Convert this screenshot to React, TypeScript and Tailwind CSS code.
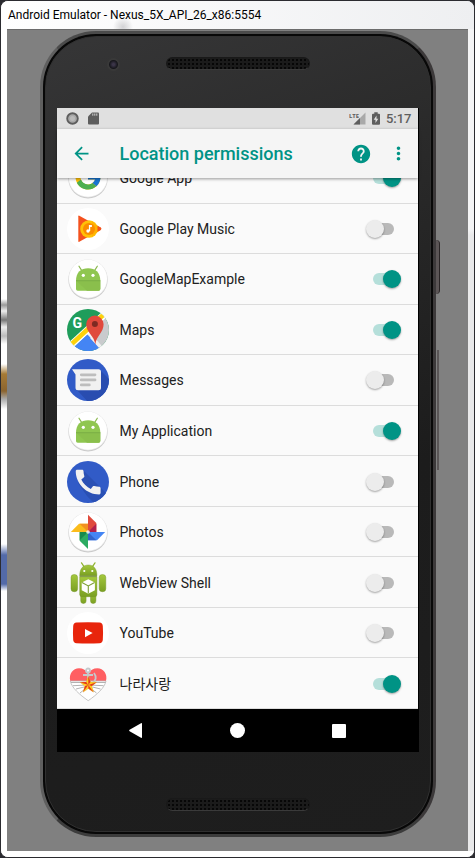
import type { ReactNode } from 'react';
import { MdArrowBack, MdHelp, MdMoreVert } from 'react-icons/md';
import { FcGoogle } from 'react-icons/fc';

function Icon({ children }: { children: ReactNode }) {
  return (
    <svg viewBox="0 0 42 42" className="size-[42px] shrink-0" aria-hidden="true">
      {children}
    </svg>
  );
}

function Disc() {
  return (
    <>
      <circle cx="21" cy="21.8" r="19.6" fill="#c9c9c9" />
      <circle cx="21" cy="21" r="19.6" fill="#e6e6e6" />
      <circle cx="21" cy="20.8" r="19" fill="#fff" />
    </>
  );
}

const GoogleIcon = () => (
  <Icon>
    <Disc />
    <FcGoogle x="6" y="5" size={30} />
  </Icon>
);

const MusicIcon = () => (
  <Icon>
    <circle cx="21" cy="21" r="21" fill="#fff" />
    <path d="M11.3 8.2q0-1 1-.5L33.6 19.6q1.6 1.3 0 2.5L12.3 33.8q-1 .4-1-.6z" fill="#f4511e" />
    <circle cx="22" cy="21" r="8.800" fill="#ffc107" />
    <path d="M25 13.500 33.200 19.800V22L25 28.500z" fill="#ffb300" />
    <path d="m30.500 17.900 3.100 1.700q1.600 1.300 0 2.500l-3.100 1.700z" fill="#f4511e" />
    <circle cx="22" cy="21" r="6" fill="#fb8c00" />
    <circle cx="21" cy="23" r="1.700" fill="#fff" />
    <path d="M21.900 23v-6h3v1.900h-1.700V23z" fill="#fff" />
  </Icon>
);

const AndroidIcon = () => (
  <Icon>
    <Disc />
    <path d="m12 8.200 2.600 4.200M30.300 8.200l-2.600 4.200" stroke="#8bb84f" strokeWidth="1.200" strokeLinecap="round" />
    <path d="M9 22.500C9 14.500 14 10.300 21.100 10.300s12.200 4.200 12.200 12.200v8.500q0 1.700-1.700 1.700H10.700Q9 32.700 9 31z" fill="#8fc650" />
    <path d="M9 22.500h24.300V31q0 1.700-1.700 1.700H20z" fill="#8abf4c" />
    <path d="M9 22.700h24.300" stroke="#76a743" strokeWidth=".8" />
    <circle cx="16.300" cy="17.300" r="1.600" fill="#fff" />
    <circle cx="26" cy="17.300" r="1.600" fill="#fff" />
  </Icon>
);

const MapsIcon = () => (
  <Icon>
    <clipPath id="map-disc">
      <circle cx="21" cy="21" r="21" />
    </clipPath>
    <g clipPath="url(#map-disc)">
      <path d="M0 0h42v42H0z" fill="#1f9d5b" />
      <path d="M42 2v40H32L19 26z" fill="#c9cbcd" />
      <path d="M3 42 20 25.500 35 42z" fill="#4485f4" />
      <path d="m20 25.500 3-2.500 16 19h-4z" fill="#f1f1f1" />
      <path d="M2 38 40 3" stroke="#fff" strokeWidth="7" />
      <path d="M2 37.500 40 2.500" stroke="#fdd20a" strokeWidth="4.500" />
      <path d="M3 42 20.500 25.500l3 3.300L9 42z" fill="#4485f4" />
    </g>
    <path d="M28.300 35.500C27.500 27 19.200 23.500 19.200 15.300a8.700 8.700 0 0 1 17.400 0c0 8.200-7.300 11.700-8.300 20.200z" fill="#e04a3c" />
    <circle cx="27.900" cy="14.900" r="3" fill="#7e2a22" />
    <text x="5.500" y="18.500" fontSize="14" fontWeight="700" fontFamily="Roboto, sans-serif" fill="#fff">G</text>
  </Icon>
);

const MessagesIcon = () => (
  <Icon>
    <clipPath id="msg-disc">
      <circle cx="21" cy="21" r="21" />
    </clipPath>
    <circle cx="21" cy="21" r="21" fill="#315bc7" />
    <path d="m34 12 10 10v22H22L10 31z" fill="#294db0" clipPath="url(#msg-disc)" />
    <path d="M5 10.300h26.500q2.500 0 2.500 2.500v16q0 2.500-2.500 2.500h-20.500q-2.500 0-2.500-2.500V15.500z" fill="#f1f1f1" />
    <path d="M14.300 15.800H28M14.300 20.900H28M14.300 25.900h8" stroke="#bdbdbd" strokeWidth="2.800" strokeLinecap="round" />
  </Icon>
);

const PhoneIcon = () => (
  <Icon>
    <clipPath id="call-disc">
      <circle cx="21" cy="21" r="21" />
    </clipPath>
    <circle cx="21" cy="21" r="21" fill="#315bc7" />
    <path d="m16 9 28 28-14 8L20 35 11 22l6-5z" fill="#2a50b4" clipPath="url(#call-disc)" />
    <path
      transform="translate(4.600 4.500) scale(1.380)"
      d="M20.010 15.380c-1.230 0-2.420-.2-3.530-.56-.35-.12-.74-.03-1.010.24l-1.570 1.970c-2.830-1.350-5.480-3.900-6.890-6.830l1.950-1.660c.27-.28.35-.67.24-1.020-.37-1.110-.56-2.300-.56-3.530 0-.54-.45-.99-.99-.99H4.190C3.650 3 3 3.240 3 3.990 3 13.280 10.730 21 20.010 21c.71 0 .99-.63.99-1.180v-3.450c0-.54-.45-.99-.99-.99z"
      fill="#f1f1f1"
    />
  </Icon>
);

const PhotosIcon = () => (
  <Icon>
    <Disc />
    <path d="M21 3.700 29.300 12v9H21z" fill="#e04a3c" />
    <path d="M29.300 12.700V21H21z" fill="#b0204c" />
    <path d="M38.200 21 30 29.300h-9V21z" fill="#4485f4" />
    <path d="M29.300 29.300H21V21z" fill="#3163cc" />
    <path d="M21 38 12.700 29.700V21H21z" fill="#2cab62" />
    <path d="M12.700 29.300V21H21z" fill="#178a4d" />
    <path d="M3.800 21 12 12.700h9V21z" fill="#fbbc1c" />
    <path d="M12.700 12.700H21V21z" fill="#f29021" />
    <circle cx="21" cy="21" r="1.800" fill="#fff" opacity=".8" />
  </Icon>
);

const WebViewIcon = () => (
  <Icon>
    <linearGradient id="robot" x1="0" y1="0" x2="0" y2="1">
      <stop offset="0" stopColor="#a4c83d" />
      <stop offset="1" stopColor="#7a9f22" />
    </linearGradient>
    <path d="m14.500.8 2.700 4M28 .8l-2.700 4" stroke="#8fb32d" strokeWidth="1.200" strokeLinecap="round" />
    <g fill="url(#robot)" stroke="#6f8f22" strokeWidth=".4">
      <path d="M12.700 13.700C12.700 6.500 16 3 21.300 3s8.600 3.500 8.600 10.700z" />
      <rect x="4" y="12.500" width="6.600" height="17.200" rx="3" />
      <rect x="32.200" y="12.500" width="6.600" height="17.200" rx="3" />
      <rect x="13.700" y="30" width="5.400" height="11.500" rx="2.400" />
      <rect x="23.500" y="30" width="5.400" height="11.500" rx="2.400" />
      <path d="M12.700 14.700h17.200v17.800q0 2.200-2.200 2.200H14.900q-2.200 0-2.200-2.200z" />
    </g>
    <path d="M12.700 14.200h17.200" stroke="#5d7a1b" strokeWidth=".8" />
    <circle cx="17.300" cy="9" r="1.100" fill="#fff" />
    <circle cx="25.300" cy="9" r="1.100" fill="#fff" />
    <path d="m21.300 17.200 6.600 3.200v7.800l-6.600 3.600-6.600-3.600v-7.800z" fill="#fff" />
    <path d="m15 20.600 6.300 3.300 6.300-3.300M21.300 23.900v7.500" fill="none" stroke="#7d9f35" strokeWidth="1.100" />
  </Icon>
);

const YouTubeIcon = () => (
  <Icon>
    <circle cx="21" cy="21" r="21" fill="#fff" />
    <path d="M9.500 10.600q11.500-.7 23 0 3 .3 3.300 3.300.5 7 0 14-.3 3-3.300 3.300-11.500.7-23 0-3-.3-3.300-3.300-.5-7 0-14 .3-3 3.300-3.300z" fill="#e8250c" />
    <path d="m18 17 7.600 4.100L18 25.200z" fill="#fff" />
  </Icon>
);

const HeartIcon = () => (
  <Icon>
    <path d="M3.300 18C1.500 11 6 5.200 12 5.200c4 0 7.500 2 9.200 5.300 1.700-3.300 5.200-5.300 9.200-5.300 6 0 10.500 5.800 8.600 12.800z" fill="#ff5f62" />
    <path d="M3.300 18H39c-1.500 7-9 13.500-17.800 19.700C12.500 31.500 4.800 25 3.300 18z" fill="#fff" stroke="#b9b9b9" strokeWidth=".8" />
    <path d="M4 19.500h13M25.500 19.500h13M6 22.700l11-.5M36.500 22.700l-11-.5M9 26l8-2M33.500 26l-8-2M13 30l5-4M29.500 30l-5-4" stroke="#aaa" strokeWidth=".9" />
    <g fill="none" stroke="#c5c9cc" strokeWidth="1.800">
      <circle cx="21" cy="7.500" r="2" />
      <path d="M21 9.500v12M16 12h10M27 10c3 4 2 8-2 10" />
    </g>
    <path d="m21.300 13.500 2.200 5.600 6 .2-4.700 3.800 1.700 6-5.200-3.500-5.100 3.500 1.700-6-4.800-3.800 6.100-.2z" fill="#ffd21f" stroke="#e0a018" strokeWidth=".4" />
    <path d="M21.300 13.500V22l2.200-2.900zM29.500 19.300 21.300 22l3.500 1.100zM26.500 29.100 21.300 22v3.600zM16.200 29.100l5.100-7.100-3.400 1.100zM13.100 19.300l8.200 2.700-2.100-2.900z" fill="#e5391d" />
  </Icon>
);

const apps: { name: string; icon: () => ReactNode; on: boolean }[] = [
  { name: 'Google App', icon: GoogleIcon, on: true },
  { name: 'Google Play Music', icon: MusicIcon, on: false },
  { name: 'GoogleMapExample', icon: AndroidIcon, on: true },
  { name: 'Maps', icon: MapsIcon, on: true },
  { name: 'Messages', icon: MessagesIcon, on: false },
  { name: 'My Application', icon: AndroidIcon, on: true },
  { name: 'Phone', icon: PhoneIcon, on: false },
  { name: 'Photos', icon: PhotosIcon, on: false },
  { name: 'WebView Shell', icon: WebViewIcon, on: false },
  { name: 'YouTube', icon: YouTubeIcon, on: false },
  { name: '나라사랑', icon: HeartIcon, on: true },
];

function Switch({ id, on }: { id: string; on: boolean }) {
  return (
    <input
      id={id}
      type="checkbox"
      role="switch"
      defaultChecked={on}
      className="relative h-[18px] w-9 shrink-0 appearance-none before:absolute before:top-[3px] before:left-[7px] before:h-3 before:w-[21px] before:rounded-full before:bg-[#b9b9b9] after:absolute after:top-0 after:left-0 after:size-[18px] after:rounded-full after:bg-[#ececec] after:shadow-[0_1px_2px_rgba(0,0,0,0.35)] checked:before:bg-[#b5dfda] checked:after:left-[17px] checked:after:bg-[#009385]"
    />
  );
}

function Speaker() {
  return (
    <div className="h-[13px] w-[144px] rounded-full border border-[#191919] border-b-[#3a3a3a] bg-[#1b1b1b] bg-[radial-gradient(circle,#070707_1px,transparent_1px)] bg-[length:4px_4px]" />
  );
}

function StatusBar() {
  return (
    <div className="mr-px flex h-[21px] items-center bg-[#e0e0e0] pr-1.5 pl-[9px] text-[#5e5e5e]">
      <svg viewBox="0 0 13 13" className="size-[13px]" aria-hidden="true">
        <circle cx="6.500" cy="6.500" r="5.300" fill="#a8a8a8" stroke="#5e5e5e" strokeWidth="1.900" />
        <circle cx="6.500" cy="6.500" r="2.500" fill="#bababa" />
      </svg>
      <svg viewBox="0 0 11 13" className="ml-[9px] h-[13px] w-[11px]" aria-hidden="true">
        <path d="M4 .5h6q1 0 1 1v10q0 1-1 1H1q-1 0-1-1V4.500z" fill="#5e5e5e" />
        <path d="M4.800 1.500v2.200M6.800 1.500v2.200M8.800 1.500v2.200" stroke="#d0d0d0" />
      </svg>
      <div className="ml-auto flex items-center">
        <svg viewBox="0 0 17 13" className="h-[13px] w-[17px]" aria-label="LTE signal">
          <path d="M16.500.5v12h-12z" fill="#a9a9a9" />
          <path d="M11 6v6.500H4.500z" fill="#5e5e5e" />
          <text x="0" y="5.500" fontSize="6" fontWeight="700" fontFamily="'Noto Sans', sans-serif" fill="#5e5e5e">LTE</text>
        </svg>
        <svg viewBox="0 0 8 13" className="ml-1.5 h-[13px] w-2" aria-hidden="true">
          <path d="M2.300.3h3.400v1.400H7q1 0 1 1v9q0 1-1 1H1q-1 0-1-1v-9q0-1 1-1h1.300z" fill="#5e5e5e" />
          <path d="M4.500 3.500 1.700 7.700h1.800V11l2.800-4.300H4.500z" fill="#e0e0e0" />
        </svg>
        <span className="ml-1.5 text-[13px] leading-5 font-medium">5:17</span>
      </div>
    </div>
  );
}

export default function App() {
  return (
    <div className="min-h-screen bg-[#2b2b30] font-['Roboto','Noto_Sans_CJK_KR',sans-serif]">
      <div className="flex min-h-screen flex-col overflow-hidden rounded-lg border border-[#2b2b30] bg-[#f6f6f7]">
        <header className="flex h-7 items-center bg-[radial-gradient(circle_at_122px_26px,#d2d2d4_0,transparent_10px),linear-gradient(90deg,#fff,#eeeff1)] px-[7px]">
          <h1 className="pb-px text-xs leading-5 text-black">
            Android Emulator - Nexus_5X_API_26_x86:5554
          </h1>
        </header>

        <div className="flex grow bg-white pb-1.5">
          <div className="w-1.5 bg-[linear-gradient(180deg,#fff_270px,#999_276px,#eee_282px,#777_291px,#eee_298px,#bbb_307px,#fff_315px,#fff_335px,#a57a35_345px,#8b642f_362px,#aaa_370px,#fff_380px,#fff_515px,#536aa8_526px,#536aa8_555px,#fff_562px)]" />
          <main className="flex grow justify-center border-t border-[#6c6c6c] bg-[#808080] pt-px pb-3.5">
            <div className="relative rounded-[56px] border-[3px] border-t-[#4b4b4b] border-r-[#3c393a] border-b-[#3c3c3c] border-l-[#5f5f5f] bg-[#080808] p-0.5">
              <div className="absolute top-[206px] -right-[7px] h-[54px] w-1 rounded-r-sm border-r border-[#2a2526] bg-[#5c5657]" />
              <div className="absolute top-[316px] -right-[6px] h-[120px] w-0.5 bg-[#5a5657]" />

              <div className="rounded-[51px] border border-[#303030] bg-[linear-gradient(160deg,#363637_0%,#2a2a2a_25%,#1c1c1c_60%,#1e1e1e_100%)] px-[11px] py-px">
                <div className="relative flex h-[70px] items-start justify-center pt-[19px]">
                  <div className="absolute top-5 left-[50px] size-[13px] rounded-full border-2 border-[#393939] bg-[radial-gradient(circle,#3b3548_1px,#17171c_4px)]" />
                  <Speaker />
                </div>

                <div className="bg-black">
                  <StatusBar />

                  <div className="relative z-10 mr-px flex h-[49px] items-center bg-[#f5f5f5] pr-[9px] pl-3.5 text-[#009385] shadow-[0_1px_3px_rgba(0,0,0,0.4)]">
                    <button type="button" aria-label="Back">
                      <MdArrowBack size={21} />
                    </button>
                    <h2 className="ml-7 grow text-lg leading-6 font-medium">Location permissions</h2>
                    <button type="button" aria-label="Help">
                      <MdHelp size={22} />
                    </button>
                    <button type="button" aria-label="More options" className="ml-4">
                      <MdMoreVert size={21} />
                    </button>
                  </div>

                  <div className="mr-px flex h-[531px] flex-col justify-end overflow-hidden bg-[#fafafa]">
                    <ul className="grid h-[556px] shrink-0 auto-rows-fr">
                      {apps.map(({ name, icon: AppIcon, on }) => (
                        <li key={name} className="flex items-center border-b border-[#dcdcdc] pt-px pr-4 pl-2.5">
                          <AppIcon />
                          <label htmlFor={name} className="ml-[11px] grow text-sm leading-5 text-[#212121]">
                            {name}
                          </label>
                          <Switch id={name} on={on} />
                        </li>
                      ))}
                    </ul>
                  </div>

                  <nav className="flex h-[43px] items-center justify-center text-white">
                    <button type="button" aria-label="Back" className="flex w-[101px] justify-center">
                      <svg viewBox="0 0 15 15" className="size-[15px]" fill="currentColor" aria-hidden="true">
                        <path d="M.6 6.800 12 .2q1-.4 1 .6v13.400q0 1-1 .6L.6 8.200q-.9-.7 0-1.400z" />
                      </svg>
                    </button>
                    <button type="button" aria-label="Home" className="flex w-[101px] justify-center">
                      <span className="size-[15px] rounded-full bg-white" />
                    </button>
                    <button type="button" aria-label="Overview" className="flex w-[101px] justify-center">
                      <span className="size-3.5 rounded-[1px] bg-white" />
                    </button>
                  </nav>
                </div>

                <div className="flex h-[78px] w-[362px] items-end justify-center pb-[19px]">
                  <Speaker />
                </div>
              </div>
            </div>
          </main>
          <div className="w-1.5 bg-[linear-gradient(180deg,#f4f4f5_200px,#e9e9ea_206px)]" />
        </div>
      </div>
    </div>
  );
}
